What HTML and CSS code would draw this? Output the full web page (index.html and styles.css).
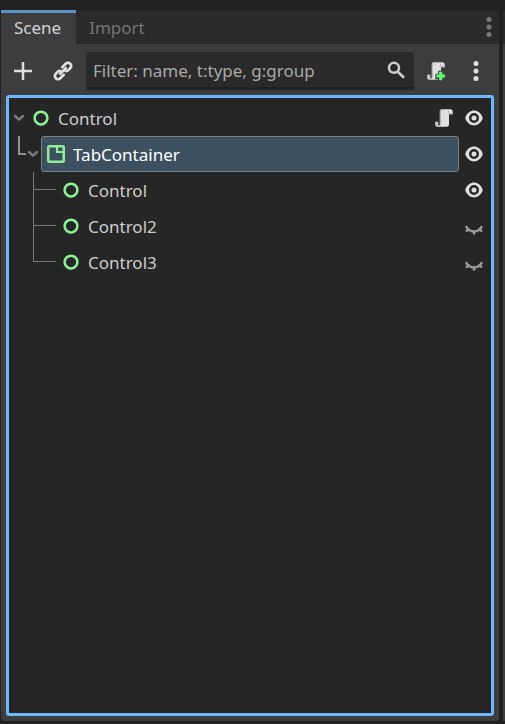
FILE: index.html
```html
<!DOCTYPE html>
<html lang="en">
<head>
<meta charset="utf-8">
<title>Scene</title>
<link rel="stylesheet" href="styles.css">
</head>
<body>
<svg class="defs" aria-hidden="true">
  <symbol id="eye" viewBox="0 0 16 16"><path fill="#e0e0e0" fill-rule="evenodd" d="M8 2C5.443 2 2.209 3.948 1.045 7.705a1 1 0 0 0-.006.57C2.163 12.022 5.379 14 8 14s5.837-1.978 6.961-5.725a1 1 0 0 0 0-.55C13.861 3.935 10.557 2 8 2zm0 2a4 4 0 0 1 0 8 4 4 0 0 1 0-8zm0 2a2 2 0 0 0 0 4 2 2 0 0 0 0-4z"/></symbol>
  <symbol id="eye-closed" viewBox="0 0 16 16"><g fill="none" stroke="#9a9a9a" stroke-width="2" stroke-linecap="round"><path d="M2 8.800C3 11 5.300 12.300 8 12.300s5-1.300 6-3.500"/><path d="M8 12.600v1.400M3.800 10.800l-1.600 1M12.200 10.800l1.600 1"/></g></symbol>
  <symbol id="control" viewBox="0 0 16 16"><circle cx="8" cy="8" r="5.1" fill="none" stroke="#8eef97" stroke-width="2"/></symbol>
  <symbol id="script" viewBox="0 0 16 16"><path fill="#e0e0e0" d="M6 1a1 1 0 0 0-1 1v11a1 1 0 0 1-2 0v-2H1v2a2 2 0 0 0 2 2h7a2 2 0 0 0 2-2V5h3V3a2 2 0 0 0-2-2z"/><path fill="#b4b4b4" d="M6 1a2 2 0 0 0-2 2v8H1v2a2 2 0 0 0 4 0V3a1 1 0 0 1 2 0v1h1V2.600A2 2 0 0 0 6 1z" opacity=".35"/><path fill="none" stroke="#b4b4b4" stroke-width=".8" d="M11.600 2v2.600H15"/></symbol>
  <symbol id="chevron" viewBox="0 0 12 8"><path d="M2 2l4 3.600L10 2" fill="none" stroke="#7c7c7c" stroke-width="2.400" stroke-linecap="round" stroke-linejoin="round"/></symbol>
  <symbol id="dots" viewBox="0 0 6 20"><circle cx="3" cy="2.500" r="2.500"/><circle cx="3" cy="10" r="2.500"/><circle cx="3" cy="17.500" r="2.500"/></symbol>
</svg>
<main class="dock">
  <header class="tabs">
    <div class="tab-list" role="tablist">
      <button class="tab active" role="tab" aria-selected="true">Scene</button>
      <button class="tab" role="tab" aria-selected="false">Import</button>
    </div>
    <button class="dock-menu" aria-label="Dock options"><svg class="dots"><use href="#dots"/></svg></button>
  </header>
  <div class="toolbar">
    <button class="tool" aria-label="Add node"><svg class="icon" viewBox="0 0 20 20"><path d="M10 1v18M1 10h18" stroke="#e0e0e0" stroke-width="2.500"/></svg></button>
    <button class="tool link" aria-label="Instantiate scene"><svg class="icon" viewBox="0 0 20 20"><g transform="rotate(-45 10 10)" fill="none" stroke="#e0e0e0" stroke-width="2.700" stroke-linecap="round"><path d="M7.800 13.200H3a3.200 3.200 0 0 1 0-6.400h2.600a3.200 3.200 0 0 1 2.600 1.400"/><path d="M12.200 6.800H17a3.200 3.200 0 0 1 0 6.400h-2.600a3.200 3.200 0 0 1-2.600-1.400"/><path d="M6 10h8"/></g></svg></button>
    <label class="filter">
      <input type="text" placeholder="Filter: name, t:type, g:group" aria-label="Filter nodes">
      <svg class="icon" viewBox="0 0 20 20"><circle cx="8" cy="7.800" r="5" fill="none" stroke="#cfcfcf" stroke-width="2.500"/><path d="M12 11.800l5.200 5.200" stroke="#cfcfcf" stroke-width="2.600" stroke-linecap="round"/></svg>
    </label>
    <button class="tool attach" aria-label="Attach script"><svg class="icon" viewBox="0 0 16 16"><use href="#script" width="16" height="16"/><path d="M9.700 7.700h4.200v2.500h2v4.500h-2V16H9.700v-1.500H7.500v-4.300h2.200z" fill="#3d3d3d"/><path d="M10.800 8.800h2v2.200H15v2h-2.200v2.200h-2V13H8.600v-2h2.200z" fill="#5fff74" stroke="#5fff74" stroke-width=".5" stroke-linejoin="round"/></svg></button>
    <button class="tool more" aria-label="Scene options"><svg class="dots"><use href="#dots"/></svg></button>
  </div>
  <section class="tree" role="tree" aria-label="Scene tree">
    <div class="row" role="treeitem" aria-level="1" aria-expanded="true">
      <button class="arrow" aria-label="Collapse"><svg class="chevron"><use href="#chevron"/></svg></button>
      <div class="item"><svg class="icon"><use href="#control"/></svg><span class="name">Control</span></div>
      <button class="tool script" aria-label="Open script"><svg class="icon"><use href="#script"/></svg></button>
      <button class="tool" aria-label="Hide"><svg class="icon"><use href="#eye"/></svg></button>
    </div>
    <div class="row level-2" role="treeitem" aria-level="2" aria-expanded="true" aria-selected="true">
      <span class="elbow"></span>
      <button class="arrow" aria-label="Collapse"><svg class="chevron"><use href="#chevron"/></svg></button>
      <div class="item selected"><svg class="icon" viewBox="0 0 20 20"><g fill="none" stroke="#8eef97"><rect x="2.250" y="2.250" width="15.500" height="15.500" rx="1" stroke-width="2.500"/><path stroke-width="2.200" d="M11 3v5h6"/></g></svg><span class="name">TabContainer</span></div>
      <button class="tool" aria-label="Hide"><svg class="icon"><use href="#eye"/></svg></button>
    </div>
    <div class="row level-3" role="treeitem" aria-level="3">
      <span class="branch"></span>
      <div class="item"><svg class="icon"><use href="#control"/></svg><span class="name">Control</span></div>
      <button class="tool" aria-label="Hide"><svg class="icon"><use href="#eye"/></svg></button>
    </div>
    <div class="row level-3" role="treeitem" aria-level="3">
      <span class="branch"></span>
      <div class="item"><svg class="icon"><use href="#control"/></svg><span class="name">Control2</span></div>
      <button class="tool" aria-label="Show"><svg class="icon"><use href="#eye-closed"/></svg></button>
    </div>
    <div class="row level-3" role="treeitem" aria-level="3">
      <span class="branch last"></span>
      <div class="item"><svg class="icon"><use href="#control"/></svg><span class="name">Control3</span></div>
      <button class="tool" aria-label="Show"><svg class="icon"><use href="#eye-closed"/></svg></button>
    </div>
  </section>
</main>
<aside class="neighbor"></aside>
</body>
</html>
```
FILE: styles.css
```css
* { box-sizing: border-box; }
body {
  margin: 0;
  min-height: 100vh;
  padding: 10px 0 3px 1px;
  display: flex;
  gap: 4px;
  background: #212121;
  color: #cdcdcd;
  font: 17px/24px "Noto Sans", sans-serif;
}
button, input { font: inherit; color: inherit; border: 0; padding: 0; background: none; }
svg { display: block; flex: none; }
.defs { position: absolute; width: 0; height: 0; }
.icon { width: 20px; height: 20px; }
.dots { width: 6px; height: 20px; fill: #e0e0e0; }
.chevron { width: 12px; height: 8px; }

.dock {
  flex: 1;
  min-width: 0;
  display: flex;
  flex-direction: column;
  background: #3d3d3d;
  border-radius: 0 3px 3px 3px;
}
.neighbor { width: 2px; background: linear-gradient(#2b2b2b 34px, #3d3d3d 34px); }

.tabs {
  height: 34px;
  display: flex;
  justify-content: space-between;
  background: #2b2b2b;
  border-radius: 0 3px 0 0;
}
.tab-list { display: flex; }
.tab { height: 34px; padding: 2px 15px 0 13px; color: #757575; }
.tab.active { background: #3d3d3d; color: #d4d4d4; padding-top: 0; padding-bottom: 2px; border-top: 3px solid #5e93c5; }
.dock-menu { padding: 0 7px; }
.dock-menu .dots { fill: #7a7a7a; }

.toolbar {
  display: flex;
  align-items: center;
  padding: 8px 20px 5px 12px;
}
.tool { flex: none; }
.link { margin: 0 13px 0 20px; }
.filter {
  flex: 1;
  min-width: 0;
  height: 38px;
  display: flex;
  align-items: center;
  padding: 0 8px 0 7px;
  background: #2a2a2a;
  border-bottom: 3px solid #222;
  border-radius: 3px 3px 0 0;
}
.filter input { flex: 1; min-width: 0; padding-top: 2px; outline: 0; }
.filter input::placeholder { color: #a9a9a9; opacity: 1; }
.attach { margin: 0 27px 0 12px; }

.tree {
  flex: 1;
  margin: 0 5px;
  margin-bottom: 5px;
  padding: 2px 7px 0 4px;
  background: #262626;
  border: 3px solid #70b6fc;
  border-radius: 3px;
}
.row { display: flex; align-items: center; height: 36px; }
.item {
  flex: 1;
  min-width: 0;
  height: 36px;
  display: flex;
  align-items: center;
  gap: 7px;
  padding-left: 6px;
}
.name { padding-top: 2px; }
.script { margin-right: 10px; }
.level-2 { padding-left: 5px; }
.elbow {
  align-self: flex-start;
  width: 8px;
  height: 19px;
  border: solid #929292;
  border-width: 0 0 2px 2px;
}
.level-2 .arrow { margin: 0 2px 0 1px; }
.selected {
  margin-right: 5px;
  padding-left: 4px;
  background: #3c5060;
  border: 1px solid #7b8084;
  border-radius: 3px;
  color: #fff;
}
.level-3 { padding-left: 20px; }
.branch {
  align-self: flex-start;
  width: 23px;
  height: 36px;
  border-left: 1px solid #777;
  background: linear-gradient(#777, #777) 0 17px / 100% 1px no-repeat;
}
.branch.last { height: 18px; }
.level-3 .item { padding-left: 5px; }
```
